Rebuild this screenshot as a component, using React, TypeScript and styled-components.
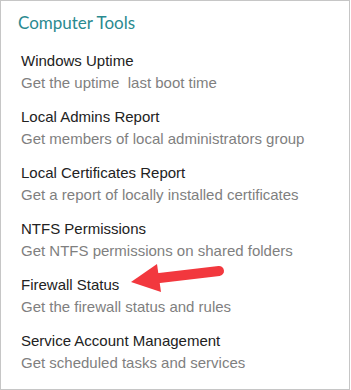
import React from "react";
import styled, { createGlobalStyle } from "styled-components";

const Global = createGlobalStyle`
  html, body { margin: 0; padding: 0; background: #ffffff; }
  * { box-sizing: border-box; }
`;

const Panel = styled.div`
  position: relative;
  width: 350px;
  height: 390px;
  border: 1px solid #c6c6c6;
  background: #ffffff;
  padding: 10px 0 0 0;
  font-family: "Liberation Sans", Arial, sans-serif;
`;

const Heading = styled.h2`
  margin: 0 0 15px 17px;
  font-family: Lato, "Open Sans", sans-serif;
  font-weight: 400;
  font-size: 17px;
  line-height: 24px;
  color: #2a8a90;
`;

const List = styled.ul`
  list-style: none;
  margin: 0;
  padding: 0 0 0 20px;
  display: flex;
  flex-direction: column;
  gap: 12px;
`;

const Item = styled.li`
  display: flex;
  flex-direction: column;
`;

const ItemTitle = styled.span`
  font-size: 15px;
  line-height: 22px;
  color: #222222;
`;

const ItemDesc = styled.span`
  font-size: 15px;
  line-height: 22px;
  color: #7f7f7f;
  white-space: pre;
`;

const Arrow = styled.svg`
  position: absolute;
  left: 125px;
  top: 255px;
  width: 100px;
  height: 40px;
  overflow: visible;
`;

const tools = [
  { title: "Windows Uptime", desc: "Get the uptime  last boot time" },
  { title: "Local Admins Report", desc: "Get members of local administrators group" },
  { title: "Local Certificates Report", desc: "Get a report of locally installed certificates" },
  { title: "NTFS Permissions", desc: "Get NTFS permissions on shared folders" },
  { title: "Firewall Status", desc: "Get the firewall status and rules" },
  { title: "Service Account Management", desc: "Get scheduled tasks and services" },
];

export default function App() {
  return (
    <>
      <Global />
      <Panel>
        <Heading>Computer Tools</Heading>
        <List>
          {tools.map((t) => (
            <Item key={t.title}>
              <ItemTitle>{t.title}</ItemTitle>
              <ItemDesc>{t.desc}</ItemDesc>
            </Item>
          ))}
        </List>
        <Arrow viewBox="125 255 100 40">
          <line x1="150" y1="278" x2="218" y2="270" stroke="#f2383e" strokeWidth="10" strokeLinecap="round" />
          <polygon points="130,281 156,263 160,291" fill="#f2383e" />
        </Arrow>
      </Panel>
    </>
  );
}
